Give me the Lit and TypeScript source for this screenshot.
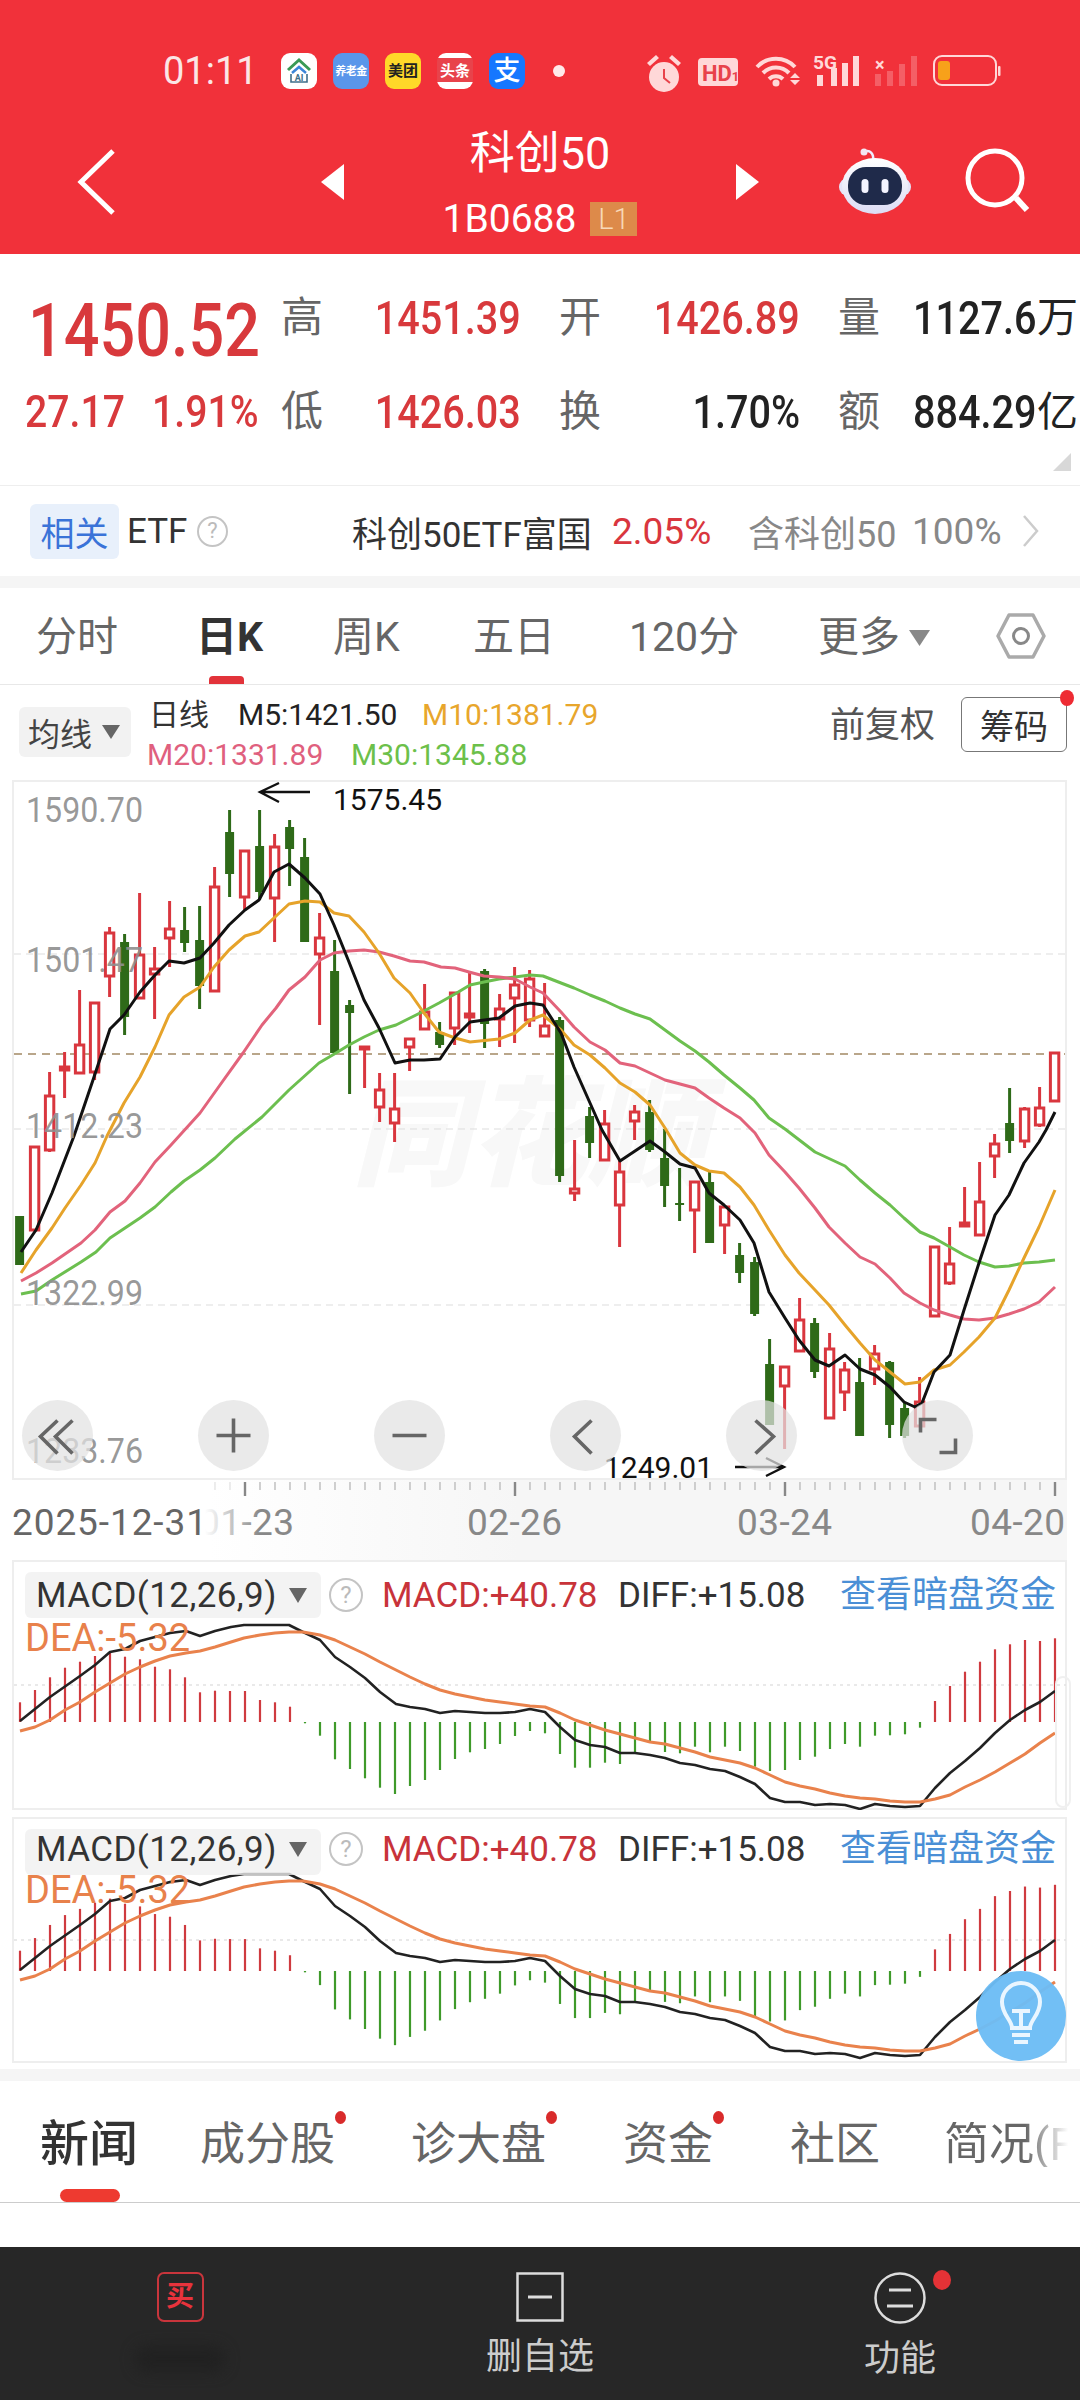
import { LitElement, html, svg, css } from 'lit';
import { customElement } from 'lit/decorators.js';

const RED = '#d9363e';
const GREEN = '#2e6a18';

// [high, bodyTop, bodyBottom, low, rising], page pixels
const candles: number[][] = [
  [1216, 1216, 1265, 1265, 0], [1147, 1147, 1230, 1230, 1], [1072, 1096, 1150, 1152, 1], [1052, 1067, 1070, 1098, 1],
  [990, 1045, 1073, 1073, 1], [1003, 1003, 1072, 1080, 1], [927, 933, 976, 997, 1], [934, 942, 1017, 1035, 0],
  [893, 955, 998, 998, 1], [947, 969, 974, 1019, 1], [901, 929, 938, 967, 1], [907, 930, 943, 952, 0],
  [906, 940, 986, 1009, 0], [867, 887, 991, 991, 1], [810, 832, 874, 897, 0], [851, 851, 897, 910, 1],
  [810, 846, 892, 900, 0], [834, 847, 898, 942, 1], [820, 827, 849, 886, 0], [838, 857, 942, 942, 0],
  [913, 938, 954, 1025, 1], [940, 971, 1053, 1053, 0], [1000, 1005, 1013, 1094, 0], [1046, 1047, 1049, 1088, 1],
  [1073, 1090, 1107, 1122, 1], [1073, 1109, 1123, 1142, 1], [1039, 1039, 1047, 1071, 1], [984, 1012, 1029, 1029, 1],
  [1022, 1032, 1045, 1048, 0], [993, 993, 1028, 1045, 1], [973, 1014, 1017, 1033, 1], [969, 971, 1024, 1048, 0],
  [994, 1009, 1019, 1047, 1], [967, 985, 998, 1043, 1], [970, 979, 1020, 1027, 1], [983, 1026, 1036, 1036, 1],
  [1017, 1020, 1176, 1182, 0], [1140, 1189, 1193, 1201, 1], [1107, 1116, 1143, 1158, 0], [1110, 1124, 1160, 1160, 1],
  [1161, 1172, 1205, 1247, 1], [1105, 1112, 1121, 1140, 1], [1100, 1112, 1150, 1152, 0], [1129, 1158, 1186, 1207, 0],
  [1168, 1203, 1205, 1221, 0], [1181, 1182, 1210, 1253, 1], [1172, 1182, 1243, 1243, 0], [1205, 1207, 1225, 1254, 1],
  [1243, 1255, 1273, 1283, 0], [1257, 1262, 1314, 1316, 0], [1339, 1364, 1425, 1425, 0], [1367, 1367, 1386, 1449, 1],
  [1298, 1320, 1351, 1351, 1], [1318, 1323, 1372, 1378, 0], [1333, 1349, 1418, 1418, 1], [1362, 1370, 1392, 1411, 1],
  [1358, 1382, 1436, 1436, 0], [1345, 1354, 1369, 1385, 1], [1361, 1362, 1425, 1438, 0], [1403, 1408, 1436, 1438, 0],
  [1377, 1402, 1426, 1426, 1], [1247, 1247, 1316, 1317, 1], [1227, 1264, 1283, 1285, 1], [1187, 1223, 1226, 1226, 1],
  [1162, 1202, 1235, 1235, 1], [1134, 1144, 1156, 1178, 1], [1088, 1123, 1141, 1153, 0], [1107, 1109, 1141, 1148, 1],
  [1087, 1108, 1125, 1127, 1], [1053, 1053, 1101, 1101, 1],
];

const ma5 = [[21,1252],[36,1230],[52,1193],[74,1136],[93,1080],[110,1029],[124,1015],[140,992],[155,975],[169,961],[184,963],[200,958],[214,943],[229,925],[245,910],[259,900],[274,872],[289,864],[305,878],[320,894],[334,925],[349,962],[364,1000],[379,1028],[395,1063],[410,1060],[424,1060],[440,1059],[455,1037],[470,1022],[499,1018],[515,1006],[530,1003],[543,1005],[561,1033],[574,1067],[590,1103],[602,1130],[620,1161],[650,1141],[665,1152],[680,1164],[695,1168],[709,1193],[724,1205],[740,1220],[754,1243],[769,1292],[785,1318],[799,1340],[815,1360],[829,1366],[845,1355],[860,1369],[875,1375],[890,1387],[904,1402],[915,1407],[922,1403],[934,1372],[950,1355],[964,1310],[979,1263],[995,1215],[1009,1195],[1024,1163],[1039,1142],[1046,1130],[1055,1112]];
const ma10 = [[21,1273],[36,1250],[52,1228],[65,1208],[81,1185],[95,1163],[107,1136],[124,1103],[140,1077],[155,1047],[169,1015],[184,997],[200,987],[214,967],[229,950],[245,936],[259,932],[275,917],[289,904],[305,901],[320,902],[334,913],[349,916],[364,932],[379,953],[394,978],[410,993],[424,1013],[439,1032],[455,1038],[470,1042],[499,1039],[515,1033],[530,1020],[543,1015],[561,1030],[574,1045],[590,1055],[605,1068],[620,1083],[635,1092],[650,1105],[665,1128],[680,1153],[695,1165],[709,1171],[724,1173],[740,1187],[754,1205],[769,1230],[785,1255],[799,1273],[815,1290],[829,1305],[845,1325],[860,1343],[875,1360],[890,1372],[905,1384],[920,1382],[934,1370],[950,1365],[964,1352],[979,1337],[995,1318],[1009,1290],[1024,1258],[1039,1227],[1055,1190]];
const ma20 = [[21,1281],[36,1273],[52,1263],[81,1243],[95,1230],[110,1212],[125,1201],[140,1183],[155,1162],[171,1145],[200,1113],[220,1085],[243,1053],[262,1025],[276,1008],[289,990],[305,977],[320,960],[334,953],[349,951],[364,950],[379,952],[394,956],[410,961],[424,962],[441,967],[455,968],[469,972],[484,976],[499,977],[515,979],[530,987],[543,993],[561,1012],[574,1027],[590,1042],[605,1050],[620,1063],[635,1066],[650,1073],[665,1080],[680,1084],[695,1088],[709,1098],[724,1108],[740,1118],[755,1133],[769,1155],[785,1172],[799,1188],[815,1208],[829,1227],[845,1243],[860,1257],[875,1264],[890,1278],[904,1293],[920,1303],[934,1310],[950,1315],[964,1319],[979,1320],[995,1318],[1009,1314],[1024,1309],[1039,1302],[1055,1287]];
const ma30 = [[21,1294],[36,1291],[52,1280],[81,1262],[96,1252],[110,1238],[125,1228],[140,1218],[155,1207],[171,1192],[184,1181],[200,1170],[215,1158],[235,1139],[262,1117],[289,1090],[319,1063],[336,1053],[349,1045],[364,1037],[379,1030],[396,1025],[410,1018],[424,1011],[439,1003],[455,994],[470,985],[484,982],[499,979],[515,977],[530,975],[543,976],[561,983],[574,988],[590,995],[605,1001],[620,1008],[635,1014],[650,1019],[665,1030],[680,1041],[695,1051],[709,1062],[724,1075],[740,1088],[754,1100],[769,1118],[785,1129],[815,1152],[845,1166],[860,1180],[875,1193],[890,1205],[904,1218],[920,1232],[934,1238],[950,1247],[964,1255],[979,1262],[995,1267],[1009,1266],[1024,1263],[1039,1262],[1055,1260]];

// macd bars, px above (+) or below (-) the zero line
const bars = [19.7,32,44.7,54.3,60.3,66,70.3,65.3,62.7,55.3,52.7,44.7,29.7,31.3,31,31,22,19.7,15.3,-1.3,-13.7,-37.3,-47,-56.3,-65.7,-72,-64,-58,-48,-37,-30.3,-27,-22,-14,-9,-11.3,-32,-45.7,-45.7,-40.7,-42,-30.3,-20.3,-30,-31.3,-24.7,-30.3,-24.7,-29,-44.7,-49,-48,-38,-34.7,-27,-22,-24.7,-13.7,-13.3,-12.3,-5.7,21,36,50.3,60.3,72.7,77.7,82,81,83.7];

// y is measured from 10px above the first panel
const diff = [[20,171],[50,147],[80,126],[95,115],[110,102],[125,99],[140,91],[155,87],[170,83],[186,81],[200,86],[215,81],[231,77],[244,75],[289,75],[303,82],[320,90],[335,107],[350,117],[365,128],[380,142],[396,154],[410,157],[425,159],[440,163],[455,161],[470,162],[485,163],[500,163],[515,162],[530,159],[545,162],[560,177],[575,190],[590,195],[605,197],[620,203],[635,203],[650,205],[665,208],[680,213],[695,215],[710,219],[725,221],[740,227],[755,234],[770,248],[785,252],[800,252],[815,255],[830,254],[845,255],[860,259],[875,254],[890,256],[905,257],[920,256],[935,238],[950,223],[965,211],[980,198],[995,183],[1010,170],[1025,160],[1040,152],[1055,141]];
const dea = [[20,181],[35,177],[50,170],[65,160],[80,152],[95,142],[110,133],[125,124],[140,117],[155,111],[170,106],[186,103],[200,101],[215,97],[231,92],[244,88],[260,85],[275,83],[289,82],[303,82],[320,85],[335,90],[350,97],[365,104],[380,112],[396,120],[410,127],[425,134],[440,140],[455,144],[470,147],[485,150],[500,152],[515,154],[530,156],[545,157],[560,163],[575,170],[590,175],[605,180],[620,184],[635,188],[650,192],[665,194],[680,198],[695,202],[710,207],[725,210],[740,213],[755,218],[770,225],[785,232],[800,236],[815,239],[830,243],[845,246],[860,248],[875,249],[890,251],[905,252],[920,252],[935,249],[950,245],[965,237],[980,230],[995,222],[1010,213],[1025,204],[1040,193],[1055,183]];

const poly = (pts: number[][], dy = 0) => pts.map(([x, y]) => `${x},${y + dy}`).join(' ');

const priceLabels = [
  ['1590.70', 822],
  ['1501.47', 972],
  ['1412.23', 1138],
  ['1322.99', 1305],
  ['1233.76', 1463],
];

const CTRL_X = [57, 233, 409, 585, 761, 937];
const CTRL_PATHS = [
  'M0 -15 L-17 1 L0 18 M15 -15 L-2 1 L15 18',
  'M-17 0 H17 M0 -17 V17',
  'M-17 0 H17',
  'M6 -15 L-11 1 L6 18',
  'M-6 -15 L12 1 L-6 18',
  'M-17 -3 V-16 H-1 M2 17 H18 V3',
];

@customElement('app-root')
export class AppRoot extends LitElement {
  static styles = css`
    :host {
      display: block;
      width: 1080px;
      height: 2400px;
      background: #fff;
      overflow: hidden;
      font-family: Roboto, 'Noto Sans CJK SC', sans-serif;
      color: #333;
    }
    svg {
      display: block;
    }

    /* header */
    .head {
      height: 254px;
      background: #f1313a;
      color: #fff;
    }
    .status {
      height: 96px;
      position: relative;
      display: flex;
      align-items: flex-start;
      padding: 53px 0 0 163px;
      box-sizing: border-box;
    }
    .time {
      width: 118px;
      font-size: 38px;
      line-height: 36px;
      color: #fbe6e6;
    }
    .apps {
      display: flex;
      gap: 16px;
    }
    .app {
      width: 36px;
      height: 36px;
      border-radius: 9px;
      display: flex;
      align-items: center;
      justify-content: center;
      overflow: hidden;
      font-weight: 700;
      line-height: 1;
    }
    .app.ai {
      background: #fff;
    }
    .app.old {
      background: #5a96ea;
      color: #fff;
      font-size: 11px;
      letter-spacing: -0.5px;
    }
    .app.mt {
      background: #ffd829;
      color: #222;
      font-size: 15px;
    }
    .app.tt {
      background: linear-gradient(#fff 15%, #e8434b 15%, #e8434b 80%, #fff 80%);
      color: #fff;
      font-size: 15px;
    }
    .app.zfb {
      background: #1677ff;
      color: #fff;
      font-size: 27px;
      font-weight: 500;
    }
    .dot {
      width: 12px;
      height: 12px;
      border-radius: 50%;
      background: #ffeaea;
      margin: 12px 0 0 28px;
    }
    .sys {
      position: absolute;
      left: 640px;
      top: 50px;
    }
    .nav {
      height: 158px;
      padding-top: 14px;
      box-sizing: border-box;
      display: grid;
      grid-template-columns: 321px 24px 390px 24px 80px 72px 1fr;
      align-items: center;
    }
    .back {
      margin-left: 75px;
    }
    .title {
      display: flex;
      flex-direction: column;
      align-items: center;
      gap: 22px;
    }
    .name {
      font-size: 45px;
      line-height: 52px;
    }
    .code {
      display: flex;
      align-items: center;
      gap: 14px;
      font-size: 39px;
      line-height: 34px;
    }
    .lvl {
      width: 47px;
      height: 34px;
      background: #dd8a4a;
      color: #f8d8b8;
      font-size: 29px;
      font-weight: 300;
      display: flex;
      align-items: center;
      justify-content: center;
    }
    .search {
      margin-left: 54px;
    }

    /* quote table */
    .quote {
      position: relative;
      height: 214px;
      border-bottom: 1px solid #eee;
      padding-top: 17px;
      display: grid;
      grid-template-columns: 281px 42px 198px 80px 199px 80px 198px;
      grid-template-rows: 94px 94px;
      align-items: center;
    }
    .lab {
      font-size: 42px;
      line-height: 1;
      color: #666;
      text-align: right;
    }
    .val {
      display: flex;
      justify-content: flex-end;
      align-items: center;
      font-size: 46px;
      line-height: 1;
      font-weight: 500;
      color: #222;
    }
    .val.up {
      color: #d8393c;
    }
    .val .cjk {
      font-size: 41px;
      font-weight: 400;
    }
    .nar {
      display: inline-block;
      transform: scaleX(0.86);
      transform-origin: right center;
    }
    .big {
      margin: 26px 0 0 28px;
      font-size: 74px;
      line-height: 1;
      font-weight: 500;
      color: #d8393c;
      transform: scaleX(0.85);
      transform-origin: left center;
    }
    .chg {
      display: flex;
      padding-left: 25px;
      font-size: 44px;
      line-height: 1;
      font-weight: 500;
      color: #d8393c;
    }
    .chg span {
      width: 127px;
      transform: scaleX(0.89);
      transform-origin: left center;
    }
    .corner {
      position: absolute;
      right: 9px;
      bottom: 14px;
    }

    /* etf row */
    .etf {
      height: 90px;
      display: flex;
      align-items: center;
      padding-left: 30px;
    }
    .rel {
      width: 89px;
      height: 55px;
      border-radius: 6px;
      background: #e8f0fb;
      color: #3a73d8;
      font-size: 34px;
      display: flex;
      align-items: center;
      justify-content: center;
    }
    .etf-t {
      width: 78px;
      padding-left: 8px;
      box-sizing: border-box;
      font-size: 35px;
      color: #333;
    }
    .q {
      box-sizing: border-box;
      border: 2px solid #c4c4c4;
      border-radius: 50%;
      color: #bbb;
      display: flex;
      align-items: center;
      justify-content: center;
      line-height: 1;
    }
    .etf .q {
      width: 31px;
      height: 31px;
      font-size: 22px;
    }
    .fund {
      width: 260px;
      margin-left: 124px;
      font-size: 35px;
      color: #333;
      white-space: nowrap;
    }
    .pct {
      width: 136px;
      font-size: 37px;
      color: #d9363e;
    }
    .incl {
      width: 164px;
      font-size: 36px;
      color: #888;
      white-space: nowrap;
    }
    .hund {
      width: 111px;
      font-size: 37px;
      color: #888;
    }
    .band {
      height: 12px;
      background: #f5f5f5;
    }

    /* period tabs */
    .tabs {
      height: 96px;
      border-bottom: 1px solid #e8e8e8;
      display: grid;
      grid-template-columns: 160px 137px 140px 156px 189px 176px 1fr;
      padding-left: 36px;
      align-items: center;
      font-size: 41px;
      color: #666;
      position: relative;
    }
    .tabs span {
      white-space: nowrap;
      display: flex;
      align-items: center;
      gap: 9px;
      line-height: 1;
      margin-top: 3px;
    }
    .tabs .on {
      color: #333;
      font-weight: 700;
    }
    .bar {
      position: absolute;
      left: 209px;
      bottom: 0;
      width: 35px;
      height: 8px;
      border-radius: 4px 4px 0 0;
      background: #e2333a;
    }

    /* ma legend */
    .legend {
      height: 95px;
      display: flex;
      align-items: flex-start;
      padding-left: 19px;
    }
    .pick {
      width: 112px;
      height: 50px;
      margin-top: 22px;
      border-radius: 6px;
      background: #f2f2f2;
      display: flex;
      align-items: center;
      gap: 10px;
      padding-left: 9px;
      box-sizing: border-box;
      font-size: 32px;
      color: #444;
    }
    .ma {
      margin: 10px 0 0 16px;
      font-size: 30px;
      line-height: 40px;
    }
    .ma div {
      display: flex;
    }
    .ma .d {
      width: 91px;
      padding-left: 2px;
      box-sizing: border-box;
      color: #333;
    }
    .ma .m5 {
      width: 184px;
      color: #222;
    }
    .ma .m10 {
      color: #e8a62c;
    }
    .ma .m20 {
      width: 204px;
      color: #e0607e;
    }
    .ma .m30 {
      color: #6cc04a;
    }
    .adj {
      margin: 23px 0 0 auto;
      font-size: 35px;
      line-height: 1;
      color: #555;
    }
    .chip {
      position: relative;
      width: 106px;
      height: 55px;
      margin: 12px 13px 0 26px;
      box-sizing: border-box;
      border: 1.5px solid #777;
      border-radius: 6px;
      font-size: 34px;
      display: flex;
      align-items: center;
      justify-content: center;
    }
    .chip i {
      position: absolute;
      top: -8px;
      right: -8px;
      width: 14px;
      height: 16px;
      border-radius: 50%;
      background: #ee2b33;
    }

    /* k line */
    .chart {
      position: relative;
      height: 700px;
    }
    .chart text {
      font-family: Roboto, sans-serif;
    }
    .chart .wm {
      font-family: 'Noto Sans CJK SC', sans-serif;
      font-weight: 900;
      font-style: italic;
      font-size: 118px;
      fill: #f8f8f8;
    }
    .ctl {
      position: absolute;
      top: 620px;
      width: 71px;
      height: 71px;
      margin-left: -35px;
      border-radius: 50%;
      background: rgba(226, 226, 226, 0.72);
    }
    .axis {
      height: 80px;
      margin-right: 13px;
      background: linear-gradient(90deg, #fff 210px, #f6f6f6 520px);
    }
    .axis text {
      font-family: Roboto, sans-serif;
      font-size: 37px;
    }

    /* macd */
    .macd {
      position: relative;
      height: 509px;
    }
    .panel {
      position: relative;
      margin: 0 13px 0 12px;
      box-sizing: border-box;
      border: 2px solid #eee;
      height: 250px;
    }
    .panel.second {
      height: 246px;
      margin-top: 7px;
    }
    .panel > svg {
      position: absolute;
      left: -14px;
      top: -2px;
    }
    .hd {
      position: relative;
      display: grid;
      grid-template-columns: 296px 61px 236px 222px 1fr;
      align-items: center;
      margin: 10px 0 0 11px;
      height: 46px;
      font-size: 35px;
      line-height: 1;
      white-space: nowrap;
    }
    .sel {
      height: 46px;
      border-radius: 6px;
      background: rgba(240, 240, 240, 0.78);
      display: flex;
      align-items: center;
      gap: 12px;
      padding-left: 11px;
      box-sizing: border-box;
      color: #333;
      letter-spacing: 0.4px;
    }
    .hd .q {
      width: 34px;
      height: 34px;
      margin-left: 8px;
      font-size: 24px;
    }
    .mv {
      color: #c8333a;
    }
    .dv {
      color: #333;
    }
    .lk {
      color: #4a8fd6;
      font-size: 36px;
    }
    .dea {
      position: relative;
      margin: 3px 0 0 11px;
      font-size: 38px;
      line-height: 34px;
      color: #e8814b;
    }
    .second .sel > span,
    .second .hd .q,
    .second .mv,
    .second .dv,
    .second .lk {
      transform: translateY(-3px);
    }
    .second .dea {
      margin-top: -2px;
    }
    .tip {
      position: absolute;
      left: 976px;
      top: 411px;
    }

    /* content tabs */
    .news {
      position: relative;
      height: 116px;
      padding: 5px 0 0 40px;
      border-bottom: 1px solid #ccc;
      display: grid;
      grid-template-columns: 160px 211px 212px 167px 154px 1fr;
      align-items: center;
      font-size: 45px;
      color: #666;
      white-space: nowrap;
      overflow: hidden;
    }
    .news span {
      position: relative;
      line-height: 1;
      justify-self: start;
    }
    .news .on {
      font-size: 49px;
      font-weight: 500;
      color: #333;
    }
    .news .badge::after {
      content: '';
      position: absolute;
      right: -11px;
      top: -11px;
      width: 11px;
      height: 13px;
      border-radius: 50%;
      background: #d92b2b;
    }
    .news .cut {
      background: linear-gradient(90deg, #666 60%, #fff 92%);
      -webkit-background-clip: text;
      background-clip: text;
      color: transparent;
      width: 135px;
      overflow: hidden;
    }
    .news .bar {
      left: 60px;
      width: 60px;
      height: 13px;
      border-radius: 7px;
      background: #ee3a30;
    }
    .gap {
      height: 44px;
    }

    /* footer */
    .foot {
      height: 153px;
      background: #272727;
      display: grid;
      grid-template-columns: repeat(3, 1fr);
      color: #ccc;
    }
    .foot > div {
      display: flex;
      flex-direction: column;
      align-items: center;
      padding-top: 25px;
      position: relative;
    }
    .foot span {
      margin-top: 15px;
      font-size: 36px;
      line-height: 40px;
    }
    .smudge {
      width: 90px;
      height: 26px;
      margin-top: 24px;
      border-radius: 13px;
      background: #212121;
      filter: blur(7px);
    }
    .buy {
      width: 47px;
      height: 50px;
      box-sizing: border-box;
      border: 2.5px solid #c9353c;
      border-radius: 7px;
      color: #e8333c;
      font-size: 28px;
      font-weight: 700;
      display: flex;
      align-items: center;
      justify-content: center;
      line-height: 1;
    }
    .mark {
      position: absolute;
      left: 213px;
      top: 23px;
      width: 18px;
      height: 20px;
      border-radius: 50%;
      background: #e43236;
    }
  `;

  private renderCandle(c: number[], i: number) {
    const [high, top, bottom, low, up] = c;
    const x = 19.6 + 15 * i;
    const color = up ? RED : GREEN;
    const wick = svg`<line x1=${x} x2=${x} y1=${high} y2=${low} stroke=${color} stroke-width="3"></line>`;
    if (up) {
      const h = Math.max(bottom - top, 2);
      return svg`${wick}<rect x=${x - 4.2} y=${top} width="8.4" height=${h} fill="#fff" stroke=${color} stroke-width="3"></rect>`;
    }
    return svg`${wick}<rect x=${x - 4.5} y=${top} width="9" height=${bottom - top} fill=${color}></rect>`;
  }

  private renderChart() {
    return svg`
      <svg width="1080" height="700" viewBox="0 780 1080 700">
        <text class="wm" x="352" y="1176">同花顺</text>
        <path d="M13 1480 V781 H1066 V1480" fill="none" stroke="#eee" stroke-width="2"></path>
        <path d="M13 1479 H1066" stroke="#eee" stroke-width="2"></path>
        ${[954, 1129, 1305].map(
          (y) => svg`<line x1="14" x2="1065" y1=${y} y2=${y} stroke="#ddd" stroke-width="1" stroke-dasharray="7 5"></line>`,
        )}
        <line x1="14" x2="1065" y1="1054" y2="1054" stroke="#b9a68a" stroke-width="2" stroke-dasharray="8 6"></line>
        ${candles.map((c, i) => this.renderCandle(c, i))}
        <g fill="none" stroke-width="3" stroke-linejoin="round">
          <polyline points=${poly(ma30)} stroke="#6cbf4f"></polyline>
          <polyline points=${poly(ma20)} stroke="#e2637b"></polyline>
          <polyline points=${poly(ma10)} stroke="#e6a32a"></polyline>
          <polyline points=${poly(ma5)} stroke="#111"></polyline>
        </g>
        ${priceLabels.map(
          ([t, y]) => svg`<text x="26" y=${y} font-size="35" fill="#8f8f8f" fill-opacity="0.92" textLength="117" lengthAdjust="spacingAndGlyphs">${t}</text>`,
        )}
        <path d="M310 792 H260 M279 783 L260 792 L279 802" fill="none" stroke="#111" stroke-width="2.4"></path>
        <text x="333" y="810" font-size="30" fill="#111">1575.45</text>
        <text x="604" y="1478" font-size="30" fill="#111">1249.01</text>
        <path d="M735 1467 H784 M766 1458 L784 1467 L766 1476" fill="none" stroke="#111" stroke-width="2.4"></path>
      </svg>
    `;
  }

  private renderAxis() {
    const ticks = [];
    for (let i = 13; i < 70; i++) {
      const x = 20 + 15 * i;
      const long = (i - 15) % 18 === 0;
      ticks.push(
        svg`<line x1=${x} x2=${x} y1="2" y2=${long ? 16 : 10} stroke=${long ? '#888' : '#c4c4c4'} stroke-width=${long ? 2.4 : 1.6} opacity=${i < 15 ? 0.4 : 1}></line>`,
      );
    }
    return svg`
      <svg width="1067" height="80">
        <defs>
          <linearGradient id="fade" gradientUnits="userSpaceOnUse" x1="205" x2="260" y1="0" y2="0">
            <stop offset="0" stop-color="#fff"></stop>
            <stop offset="1" stop-color="#888"></stop>
          </linearGradient>
        </defs>
        ${ticks}
        <text x="199" y="55" fill="url(#fade)" textLength="95">01-23</text>
        <text x="12" y="55" fill="#666" textLength="195">2025-12-31</text>
        <text x="467" y="55" fill="#888" textLength="95">02-26</text>
        <text x="737" y="55" fill="#888" textLength="95">03-24</text>
        <text x="970" y="55" fill="#888" textLength="95">04-20</text>
      </svg>
    `;
  }

  private renderMacd(second: boolean) {
    const h = second ? 246 : 250;
    const dy = second ? -18 : -10;
    const zero = 172 + dy;
    const mid = second ? 123 : 125;
    const k = second ? 1.03 : 1;
    return html`
      <div class="panel ${second ? 'second' : ''}">
        <svg width="1080" height=${h} viewBox="0 0 1080 ${h}">
          <line x1="14" x2="1066" y1=${mid} y2=${mid} stroke="#e2e2e2" stroke-width="1.5" stroke-dasharray="3 4"></line>
          ${bars.map((b, i) => {
            const x = 20 + 15 * i;
            const v = b * k;
            return svg`<line x1=${x} x2=${x} y1=${zero} y2=${zero - v} stroke=${b > 0 ? '#cf3a3f' : '#3f9a2a'} stroke-width="2.2"></line>`;
          })}
          <g fill="none" stroke-width="2.6" stroke-linejoin="round">
            <polyline points=${poly(diff, dy)} stroke="#222"></polyline>
            <polyline points=${poly(dea, dy)} stroke="#e9824c" stroke-width="3"></polyline>
          </g>
          ${second
            ? ''
            : svg`<rect x="1056" y="117" width="14" height="130" rx="7" fill="none" stroke="#f0f0f0" stroke-width="2"></rect>`}
        </svg>
        <div class="hd">
          <div class="sel">
            <span>MACD(12,26,9)</span>
            <span>
              <svg width="18" height="15" viewBox="0 0 18 15"><path d="M0 0 H18 L9 15 Z" fill="#666"></path></svg>
            </span>
          </div>
          <div class="q">?</div>
          <div class="mv">MACD:+40.78</div>
          <div class="dv">DIFF:+15.08</div>
          <div class="lk">查看暗盘资金</div>
        </div>
        <div class="dea">DEA:-5.32</div>
      </div>
    `;
  }

  private renderSysIcons() {
    return html`
      <svg class="sys" width="370" height="42" viewBox="640 50 370 42">
        <g fill="#ffd8d8">
          <circle cx="664" cy="77" r="15"></circle>
          <path d="M647 63 L656 55 L659 58 L650 66 Z M681 63 L672 55 L669 58 L678 66 Z"></path>
          <rect x="698" y="58" width="40" height="28" rx="4"></rect>
          <rect x="817" y="75" width="6" height="11"></rect>
          <rect x="831" y="68" width="6" height="18"></rect>
          <rect x="842" y="63" width="6" height="23"></rect>
          <rect x="853" y="56" width="6" height="30"></rect>
          <circle cx="776" cy="83" r="3.5"></circle>
          <path d="M795 73 L800 78 H790 Z M795 85 L800 80 H790 Z"></path>
        </g>
        <path d="M664 69 V78 L670 83" fill="none" stroke="#e8434b" stroke-width="2"></path>
        <text x="702" y="81" font-size="22" font-weight="700" fill="#e8434b" font-family="Roboto">HD<tspan font-size="13">1</tspan></text>
        <g fill="none" stroke="#ffd8d8" stroke-width="4">
          <path d="M757 67 A26 26 0 0 1 795 67"></path>
          <path d="M763 73 A18 18 0 0 1 789 73"></path>
          <path d="M769 79 A10 10 0 0 1 783 79"></path>
        </g>
        <text x="813" y="69" font-size="19" font-weight="700" fill="#ffd8d8" font-family="Roboto" textLength="24" lengthAdjust="spacingAndGlyphs">5G</text>
        <text x="875" y="71" font-size="18" font-weight="700" fill="#ffd8d8" font-family="Roboto">×</text>
        <g fill="#ffd8d8" opacity="0.28">
          <rect x="875" y="74" width="6" height="12"></rect>
          <rect x="887" y="71" width="6" height="15"></rect>
          <rect x="899" y="64" width="6" height="22"></rect>
          <rect x="911" y="56" width="6" height="30"></rect>
        </g>
        <rect x="934" y="56" width="62" height="29" rx="8" fill="none" stroke="#ffd8d8" stroke-width="2"></rect>
        <rect x="938" y="61" width="12" height="19" rx="3" fill="#f7a11a"></rect>
        <rect x="998" y="66" width="2.5" height="10" rx="1" fill="#ffd8d8"></rect>
      </svg>
    `;
  }

  render() {
    return html`
      <div class="head">
        <div class="status">
          <div class="time">01:11</div>
          <div class="apps">
            <div class="app ai">
              <svg width="28" height="28" viewBox="0 0 28 28">
                <path d="M3 13 L14 3 L25 13" fill="none" stroke="#3a9a55" stroke-width="3"></path>
                <path d="M7 16 L14 10 L21 16" fill="none" stroke="#3b86d8" stroke-width="2.5"></path>
                <path d="M6 17 V25 H22 V17" fill="none" stroke="#3f6f8a" stroke-width="1.6"></path>
                <text x="14" y="24" font-size="9" text-anchor="middle" fill="#3f6f8a" font-family="Roboto">AI</text>
              </svg>
            </div>
            <div class="app old">养老金</div>
            <div class="app mt">美团</div>
            <div class="app tt">头条</div>
            <div class="app zfb">支</div>
          </div>
          <div class="dot"></div>
          ${this.renderSysIcons()}
        </div>
        <div class="nav">
          <svg class="back" width="44" height="70" viewBox="0 0 44 70">
            <path d="M38 4 L6 35 L38 66" fill="none" stroke="#fff" stroke-width="5"></path>
          </svg>
          <svg width="24" height="36" viewBox="0 0 24 36"><path d="M23 0 V36 L0 18 Z" fill="#fff"></path></svg>
          <div class="title">
            <div class="name">科创50</div>
            <div class="code"><span>1B0688</span><span class="lvl">L1</span></div>
          </div>
          <svg width="24" height="36" viewBox="0 0 24 36"><path d="M1 0 V36 L24 18 Z" fill="#fff"></path></svg>
          <div></div>
          <svg width="72" height="68" viewBox="840 146 72 68">
            <defs>
              <linearGradient id="bot" x1="0" x2="0" y1="0" y2="1">
                <stop offset="0" stop-color="#fff"></stop>
                <stop offset="1" stop-color="#dcdcf5"></stop>
              </linearGradient>
            </defs>
            <path d="M865 150 C871 147 875 152 874 158" fill="none" stroke="#eef" stroke-width="2.5"></path>
            <circle cx="865" cy="150" r="3.5" fill="#f4e6f2"></circle>
            <rect x="840" y="176" width="72" height="18" rx="9" fill="#e4e4f8"></rect>
            <ellipse cx="876" cy="184" rx="33" ry="28" fill="url(#bot)"></ellipse>
            <rect x="849" y="165" width="54" height="38" rx="18" fill="#1f2a4a"></rect>
            <rect x="862.5" y="177" width="7" height="14" rx="3.5" fill="#f4f4ff"></rect>
            <rect x="882.5" y="177" width="7" height="14" rx="3.5" fill="#f4f4ff"></rect>
          </svg>
          <svg class="search" width="68" height="68" viewBox="0 0 68 68">
            <circle cx="30" cy="30" r="27" fill="none" stroke="#fff" stroke-width="5"></circle>
            <path d="M51 50 L62 62" stroke="#fff" stroke-width="6"></path>
          </svg>
        </div>
      </div>

      <div class="quote">
        <div class="big">1450.52</div>
        <div class="lab">高</div>
        <div class="val up"><span class="nar">1451.39</span></div>
        <div class="lab">开</div>
        <div class="val up"><span class="nar">1426.89</span></div>
        <div class="lab">量</div>
        <div class="val"><span class="nar">1127.6</span><span class="cjk">万</span></div>
        <div class="chg"><span>27.17</span><span>1.91%</span></div>
        <div class="lab">低</div>
        <div class="val up"><span class="nar">1426.03</span></div>
        <div class="lab">换</div>
        <div class="val"><span class="nar">1.70%</span></div>
        <div class="lab">额</div>
        <div class="val"><span class="nar">884.29</span><span class="cjk">亿</span></div>
        <svg class="corner" width="18" height="18" viewBox="0 0 18 18"><path d="M18 0 V18 H0 Z" fill="#d8d8d8"></path></svg>
      </div>

      <div class="etf">
        <div class="rel">相关</div>
        <div class="etf-t">ETF</div>
        <div class="q">?</div>
        <div class="fund">科创50ETF富国</div>
        <div class="pct">2.05%</div>
        <div class="incl">含科创50</div>
        <div class="hund">100%</div>
        <svg width="16" height="32" viewBox="0 0 16 32"><path d="M1 1 L14 16 L1 31" fill="none" stroke="#ccc" stroke-width="2.5"></path></svg>
      </div>
      <div class="band"></div>

      <div class="tabs">
        <span>分时</span>
        <span class="on">日K</span>
        <span>周K</span>
        <span>五日</span>
        <span>120分</span>
        <span>更多<svg width="21" height="16" viewBox="0 0 21 16"><path d="M0 0 H21 L10.5 16 Z" fill="#888"></path></svg></span>
        <svg width="54" height="50" viewBox="-27 -25 54 50">
          <path d="M-12 -21 H12 L23 0 L12 21 H-12 L-23 0 Z" fill="none" stroke="#aaa" stroke-width="3.5" stroke-linejoin="round"></path>
          <circle r="7.5" fill="none" stroke="#888" stroke-width="3"></circle>
        </svg>
        <div class="bar"></div>
      </div>

      <div class="legend">
        <div class="pick">均线<svg width="18" height="14" viewBox="0 0 18 14"><path d="M0 0 H18 L9 14 Z" fill="#666"></path></svg></div>
        <div class="ma">
          <div><span class="d">日线</span><span class="m5">M5:1421.50</span><span class="m10">M10:1381.79</span></div>
          <div><span class="m20">M20:1331.89</span><span class="m30">M30:1345.88</span></div>
        </div>
        <div class="adj">前复权</div>
        <div class="chip">筹码<i></i></div>
      </div>

      <div class="chart">
        ${this.renderChart()}
        ${CTRL_X.map(
          (x, i) => html`
            <div class="ctl" style="left:${x}px">
              <svg width="71" height="71" viewBox="-35.5 -35.5 71 71">
                <path d=${CTRL_PATHS[i]} fill="none" stroke="#666" stroke-width="3.6"></path>
              </svg>
            </div>
          `,
        )}
      </div>
      <div class="axis">${this.renderAxis()}</div>

      <div class="macd">
        ${this.renderMacd(false)}
        ${this.renderMacd(true)}
        <svg class="tip" width="90" height="90" viewBox="0 0 90 90">
          <circle cx="45" cy="45" r="45" fill="#6cbcf5" fill-opacity="0.96"></circle>
          <path d="M36 57 C36 49 26 44 26 31 A19 19 0 0 1 64 31 C64 44 54 49 54 57 Z" fill="none" stroke="#eaf6ff" stroke-width="4"></path>
          <path d="M36 40 H54 M45 40 V57 M36 64 H54 M38 71 H52" fill="none" stroke="#eaf6ff" stroke-width="4"></path>
        </svg>
      </div>
      <div class="band"></div>

      <div class="news">
        <span class="on">新闻</span>
        <span class="badge">成分股</span>
        <span class="badge">诊大盘</span>
        <span class="badge">资金</span>
        <span>社区</span>
        <span class="cut">简况(F</span>
        <div class="bar"></div>
      </div>
      <div class="gap"></div>

      <div class="foot">
        <div>
          <div class="buy">买</div>
          <div class="smudge"></div>
        </div>
        <div>
          <svg width="48" height="50" viewBox="0 0 48 50">
            <rect x="1.5" y="1.5" width="45" height="47" fill="none" stroke="#ddd" stroke-width="2.5"></rect>
            <path d="M12 25 H36" stroke="#ddd" stroke-width="3"></path>
          </svg>
          <span>删自选</span>
        </div>
        <div>
          <svg width="54" height="52" viewBox="0 0 54 52">
            <circle cx="27" cy="26" r="24.5" fill="none" stroke="#ddd" stroke-width="2.5"></circle>
            <path d="M16 18 H38 M14 34 H40" stroke="#ddd" stroke-width="3"></path>
          </svg>
          <span>功能</span>
          <div class="mark"></div>
        </div>
      </div>
    `;
  }
}

declare global {
  interface HTMLElementTagNameMap {
    'app-root': AppRoot;
  }
}
